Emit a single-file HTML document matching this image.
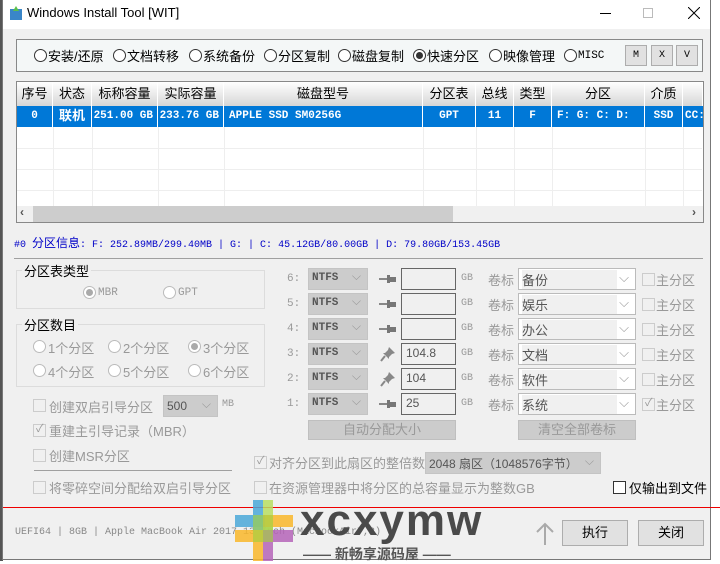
<!DOCTYPE html>
<html><head><meta charset="utf-8"><style>
*{margin:0;padding:0;box-sizing:border-box}
body{width:720px;height:561px;overflow:hidden;background:#fff;font-family:"Liberation Sans","Noto Sans CJK SC",sans-serif;font-size:13px;color:#000;position:relative}
.a{position:absolute;white-space:nowrap}
#win{position:absolute;left:2px;top:0;width:709px;height:560px;background:#f0f0f0;border:1px solid #777;border-top:none}
#tb{position:absolute;left:0;top:0;width:100%;height:29px;background:#fff}
.mono{font-family:"Liberation Mono","Noto Sans CJK SC",monospace}
.rad{position:absolute;width:13px;height:13px;border:1px solid #333;border-radius:50%;background:#fff}
.rad.g{border-color:#bbb}
.rad.on::after{content:"";position:absolute;left:2px;top:2px;width:7px;height:7px;border-radius:50%;background:#333}
.rad.g.on::after{background:#aaa}
.cb{position:absolute;width:13px;height:13px;border:1px solid #ccc;background:#f0f0f0}
.cb.k{border-color:#333;background:#fff}
.gray{color:#999}
.cmb{position:absolute;height:22px;background:#ccc;border:1px solid #c4c4c4;font-size:11px;padding:3px 0 0 3px;font-family:"Liberation Mono",monospace;color:#555;font-weight:bold}
.cmb::after{content:"⌵";position:absolute;right:6px;top:1px;color:#999;font-size:12px;font-weight:normal}
.inp{position:absolute;height:22px;border:1px solid #666;background:#f0f0f0;padding:2px 0 0 4px;font-size:12px;color:#555}
.wc{position:absolute;height:22px;border:1px solid #bbb;background:#fff;padding:1px 0 0 3px;color:#555}
.wc span{display:inline-block;background:#f0f0f0;width:95px}
.wc::after{content:"⌵";position:absolute;right:6px;top:1px;color:#999}
.btn{position:absolute;border:1px solid #adadad;background:#e1e1e1;text-align:center}
.gb{position:absolute;border:1px solid #dcdcdc}
.hd{position:absolute;top:82px;height:24px;background:linear-gradient(#fff,#d6d6d6);border-right:1px solid #fff;text-align:center;line-height:24px;font-size:13px}
.rw{position:absolute;top:106px;height:21px;background:#0078d7;color:#fff;font-weight:bold;text-align:center;line-height:21px;font-family:"Liberation Mono","Noto Sans CJK SC",monospace;font-size:11px;border-right:1px solid #fff;overflow:hidden}
.vl{position:absolute;top:127px;height:79px;width:1px;background:#eee}
.hl{position:absolute;left:17px;width:685px;height:1px;background:#eee}
</style></head><body>
<div class="a" style="left:0;top:0;width:3px;height:561px;background:#555"></div>
<div id="win">
<div id="tb">
<svg class="a" style="left:6px;top:5px" width="14" height="16"><rect x="1" y="4" width="12" height="11" fill="#3a86c8"/><path d="M7 1 L10 6 L4 6Z" fill="#5ac04a"/></svg>
<div class="a" style="left:24px;top:5px;font-size:13px">Windows Install Tool [WIT]</div>
<div class="a" style="left:597px;top:13px;width:11px;height:1px;background:#000"></div>
<div class="a" style="left:640px;top:8px;width:10px;height:10px;border:1px solid #bbb"></div>
<svg class="a" style="left:685px;top:7px" width="12" height="12"><path d="M0 0L12 12M12 0L0 12" stroke="#000"/></svg>
</div>
</div>
<!-- tabs -->
<div class="a" style="left:16px;top:39px;width:687px;height:33px;border:1px solid #888;background:#f4f7f7"></div>
<div class="rad" style="left:34px;top:49px"></div><div class="a" style="left:48px;top:46px">安装/还原</div>
<div class="rad" style="left:113px;top:49px"></div><div class="a" style="left:127px;top:46px">文档转移</div>
<div class="rad" style="left:189px;top:49px"></div><div class="a" style="left:203px;top:46px">系统备份</div>
<div class="rad" style="left:264px;top:49px"></div><div class="a" style="left:278px;top:46px">分区复制</div>
<div class="rad" style="left:338px;top:49px"></div><div class="a" style="left:352px;top:46px">磁盘复制</div>
<div class="rad on" style="left:413px;top:49px"></div><div class="a" style="left:427px;top:46px">快速分区</div>
<div class="rad" style="left:489px;top:49px"></div><div class="a" style="left:503px;top:46px">映像管理</div>
<div class="rad" style="left:564px;top:49px"></div><div class="a mono" style="left:578px;top:49px;font-size:11px;line-height:14px">MISC</div>
<div class="btn mono" style="left:625px;top:45px;width:22px;height:21px;font-size:10px;line-height:19px">M</div>
<div class="btn mono" style="left:651px;top:45px;width:22px;height:21px;font-size:10px;line-height:19px">X</div>
<div class="btn mono" style="left:676px;top:45px;width:22px;height:21px;font-size:10px;line-height:19px">V</div>
<!-- table -->
<div class="a" style="left:16px;top:81px;width:688px;height:142px;border:1px solid #888;background:#fff"></div>
<div class="hd" style="left:17px;width:36px">序号</div>
<div class="hd" style="left:53px;width:39px">状态</div>
<div class="hd" style="left:92px;width:66px">标称容量</div>
<div class="hd" style="left:158px;width:66px">实际容量</div>
<div class="hd" style="left:224px;width:199px">磁盘型号</div>
<div class="hd" style="left:423px;width:53px">分区表</div>
<div class="hd" style="left:476px;width:38px">总线</div>
<div class="hd" style="left:514px;width:38px">类型</div>
<div class="hd" style="left:552px;width:93px">分区</div>
<div class="hd" style="left:645px;width:38px">介质</div>
<div class="hd" style="left:683px;width:20px"></div>
<div class="rw" style="left:17px;width:36px">0</div>
<div class="rw" style="left:53px;width:39px;font-size:13px">联机</div>
<div class="rw" style="left:92px;width:66px;text-align:right;padding-right:4px">251.00 GB</div>
<div class="rw" style="left:158px;width:66px;text-align:right;padding-right:4px">233.76 GB</div>
<div class="rw" style="left:224px;width:199px;text-align:left;padding-left:5px">APPLE SSD SM0256G</div>
<div class="rw" style="left:423px;width:53px">GPT</div>
<div class="rw" style="left:476px;width:38px">11</div>
<div class="rw" style="left:514px;width:38px">F</div>
<div class="rw" style="left:552px;width:93px;text-align:left;padding-left:5px">F: G: C: D:</div>
<div class="rw" style="left:645px;width:38px">SSD</div>
<div class="rw" style="left:683px;width:20px;text-align:left;padding-left:2px;border:none">CC:</div>
<div class="vl" style="left:53px"></div><div class="vl" style="left:92px"></div><div class="vl" style="left:158px"></div><div class="vl" style="left:224px"></div><div class="vl" style="left:423px"></div><div class="vl" style="left:476px"></div><div class="vl" style="left:514px"></div><div class="vl" style="left:552px"></div><div class="vl" style="left:645px"></div><div class="vl" style="left:683px"></div>
<div class="hl" style="top:148px"></div><div class="hl" style="top:169px"></div><div class="hl" style="top:190px"></div>
<div class="a" style="left:17px;top:206px;width:686px;height:16px;background:#f0f0f0"></div>
<div class="a" style="left:33px;top:206px;width:420px;height:16px;background:#cdcdcd"></div>
<div class="a" style="left:20px;top:205px;font-size:12px;color:#555;font-weight:bold">‹</div>
<div class="a" style="left:692px;top:205px;font-size:12px;color:#555;font-weight:bold">›</div>
<!-- info -->
<div class="a mono" style="left:14px;top:234px;font-size:10px;color:#0000c8">#0 <span style="font-size:12px">分区信息</span>: F: 252.89MB/299.40MB | G: | C: 45.12GB/80.00GB | D: 79.80GB/153.45GB</div>
<div class="a" style="left:14px;top:258px;width:689px;height:1px;background:#a0a0a0"></div>
<!-- left groups -->
<div class="gb" style="left:16px;top:270px;width:249px;height:39px"></div>
<div class="a" style="left:22px;top:261px;background:#f0f0f0;padding:0 2px">分区表类型</div>
<div class="rad g on" style="left:83px;top:286px"></div><div class="a gray mono" style="left:98px;top:287px;font-size:11px">MBR</div>
<div class="rad g" style="left:163px;top:286px"></div><div class="a gray mono" style="left:178px;top:287px;font-size:11px">GPT</div>
<div class="gb" style="left:16px;top:324px;width:249px;height:63px"></div>
<div class="a" style="left:22px;top:315px;background:#f0f0f0;padding:0 2px">分区数目</div>
<div class="rad g" style="left:33px;top:340px"></div><div class="a gray" style="left:48px;top:338px">1个分区</div>
<div class="rad g" style="left:108px;top:340px"></div><div class="a gray" style="left:123px;top:338px">2个分区</div>
<div class="rad g on" style="left:188px;top:340px"></div><div class="a gray" style="left:203px;top:338px">3个分区</div>
<div class="rad g" style="left:33px;top:364px"></div><div class="a gray" style="left:48px;top:362px">4个分区</div>
<div class="rad g" style="left:108px;top:364px"></div><div class="a gray" style="left:123px;top:362px">5个分区</div>
<div class="rad g" style="left:188px;top:364px"></div><div class="a gray" style="left:203px;top:362px">6个分区</div>
<div class="cb" style="left:33px;top:399px"></div><div class="a gray" style="left:49px;top:397px">创建双启引导分区</div>
<div class="cmb" style="left:163px;top:395px;width:55px;font-weight:normal;font-family:'Liberation Sans';font-size:12px">500</div>
<div class="a gray mono" style="left:222px;top:399px;font-size:10px">MB</div>
<div class="cb" style="left:33px;top:424px"></div><div class="a gray" style="left:36px;top:420px;font-size:11px">✓</div><div class="a gray" style="left:49px;top:421px">重建主引导记录（MBR）</div>
<div class="cb" style="left:33px;top:449px"></div><div class="a gray" style="left:49px;top:446px">创建MSR分区</div>
<div class="a" style="left:34px;top:470px;width:198px;height:1px;background:#a0a0a0"></div>
<div class="cb" style="left:33px;top:481px"></div><div class="a gray" style="left:49px;top:478px">将零碎空间分配给双启引导分区</div>
<!-- right rows -->
<div id="rows"></div>
<div class="btn gray" style="left:308px;top:420px;width:148px;height:20px;background:#ccc;border-color:#bfbfbf;line-height:18px">自动分配大小</div>
<div class="btn gray" style="left:518px;top:420px;width:118px;height:20px;background:#ccc;border-color:#bfbfbf;line-height:18px">清空全部卷标</div>
<div class="cb" style="left:254px;top:456px"></div><div class="a gray" style="left:257px;top:452px;font-size:11px">✓</div><div class="a gray" style="left:269px;top:453px">对齐分区到此扇区的整倍数：</div>
<div class="cmb" style="left:425px;top:452px;width:176px;font-weight:normal;font-family:'Liberation Sans','Noto Sans CJK SC';font-size:12px;padding-top:2px">2048 扇区（1048576字节）</div>
<div class="cb" style="left:254px;top:481px"></div><div class="a gray" style="left:269px;top:478px">在资源管理器中将分区的总容量显示为整数GB</div>
<div class="cb k" style="left:613px;top:481px"></div><div class="a" style="left:629px;top:478px">仅输出到文件</div>
<!-- bottom -->
<div class="a" style="left:3px;top:507px;width:717px;height:1px;background:#e00"></div>
<div class="a mono" style="left:15px;top:527px;font-size:10px;color:#888">UEFI64 | 8GB | Apple MacBook Air 2017 13 Inch (MacBookAir7,2)</div>
<svg class="a" style="left:535px;top:522px" width="20" height="24"><path d="M10 23V2M2 10L10 2L18 10" stroke="#aaa" stroke-width="2" fill="none"/></svg>
<div class="btn" style="left:562px;top:520px;width:66px;height:26px;line-height:24px">执行</div>
<div class="btn" style="left:638px;top:520px;width:66px;height:26px;line-height:24px">关闭</div>
<!-- watermark -->
<svg class="a" style="left:235px;top:500px" width="62" height="61">
<rect x="18" y="0" width="10" height="30" fill="#4aa8d8" opacity=".85"/><rect x="28" y="0" width="10" height="30" fill="#b9de62" opacity=".85"/>
<rect x="0" y="15" width="30" height="12" fill="#4aa8d8" opacity=".85"/><rect x="28" y="15" width="30" height="12" fill="#f9b72a" opacity=".85"/>
<rect x="0" y="30" width="30" height="12" fill="#f9b72a" opacity=".85"/><rect x="28" y="30" width="30" height="12" fill="#b564b8" opacity=".85"/>
<rect x="18" y="30" width="10" height="31" fill="#f9b72a" opacity=".85"/><rect x="28" y="30" width="10" height="31" fill="#b564b8" opacity=".85"/>
<rect x="18" y="15" width="20" height="27" fill="#a7d24a" opacity=".7"/>
</svg>
<div class="a" style="left:300px;top:496px;font-size:44px;font-weight:bold;color:#4a4a4a;letter-spacing:2px">xcxymw</div>
<div class="a" style="left:303px;top:544px;font-size:14px;color:#555;font-weight:bold">—— 新畅享源码屋 ——</div>
<script>
var h='',lab=['备份','娱乐','办公','文档','软件','系统'],val=['','','','104.8','104','25'];
for(var i=0;i<6;i++){var y=268+i*25,n=6-i;
h+='<div class="a gray mono" style="left:287px;top:'+(y+5)+'px;font-size:11px">'+n+':</div>';
h+='<div class="cmb" style="left:308px;top:'+y+'px;width:60px">NTFS</div>';
h+=(i==3||i==4)?'<svg class="a" style="left:380px;top:'+(y+3)+'px" width="16" height="16"><path d="M9 1L15 7L12 8L9 11L9 13L3 7L5 7L8 4Z" fill="#888"/><path d="M5 10L1 15" stroke="#888" stroke-width="2"/></svg>':'<svg class="a" style="left:379px;top:'+(y+6)+'px" width="18" height="10"><path d="M0 5H8" stroke="#888" stroke-width="2"/><rect x="8" y="1" width="3" height="8" fill="#777"/><rect x="11" y="3" width="6" height="5" fill="#777"/></svg>';
h+='<div class="inp" style="left:401px;top:'+y+'px;width:55px">'+val[i]+'</div>';
h+='<div class="a gray mono" style="left:461px;top:'+(y+5)+'px;font-size:10px">GB</div>';
h+='<div class="a gray" style="left:488px;top:'+(y+2)+'px">卷标</div>';
h+='<div class="wc" style="left:518px;top:'+y+'px;width:118px"><span>'+lab[i]+'</span></div>';
h+='<div class="cb" style="left:642px;top:'+(y+5)+'px"></div>'+(i==5?'<div class="a gray" style="left:645px;top:'+(y+1)+'px;font-size:11px">✓</div>':'');
h+='<div class="a gray" style="left:656px;top:'+(y+2)+'px">主分区</div>';}
document.getElementById('rows').innerHTML=h;
</script>
</body></html>
